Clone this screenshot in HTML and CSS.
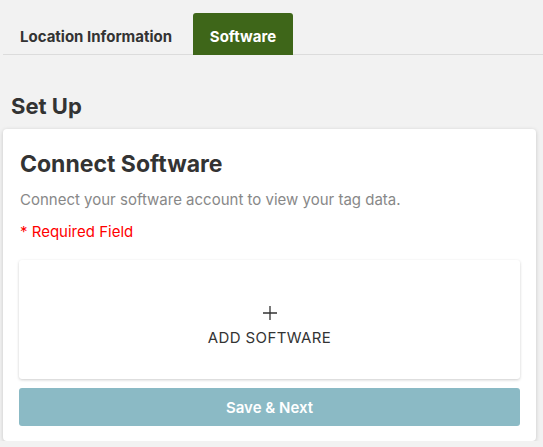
FILE: index.html
```html
<!DOCTYPE html>
<html>
<head>
<meta charset="utf-8">
<link rel="stylesheet" href="styles.css">
</head>
<body>
<nav class="tabs">
  <div class="tab">Location Information</div>
  <div class="tab tab-active">Software</div>
</nav>
<h2 class="section-title">Set Up</h2>
<section class="card">
  <h1 class="card-title">Connect Software</h1>
  <p class="card-desc">Connect your software account to view your tag data.</p>
  <p class="required">* Required Field</p>
  <div class="add-box">
    <svg class="plus" width="16" height="16" viewBox="0 0 16 16"><path d="M8 1v14M1 8h14" stroke="#333" stroke-width="1.3" fill="none"/></svg>
    <div class="add-label">ADD SOFTWARE</div>
  </div>
  <button class="save-btn">Save &amp; Next</button>
</section>
</body>
</html>
```
FILE: styles.css
```css
* { box-sizing: border-box; }
body {
  margin: 0;
  background: #f2f2f2;
  font-family: Inter, "Noto Sans", sans-serif;
  color: #333;
}
.tabs {
  display: flex;
  margin-left: 3px;
  padding-top: 13px;
  border-bottom: 1px solid #dcdcdc;
}
.tab {
  height: 42px;
  margin-bottom: -1px;
  padding-top: 4px;
  display: flex;
  align-items: center;
  font-weight: 700;
  font-size: 15px;
  color: #333;
}
.tab:first-child { width: 190px; padding-left: 17px; }
.tab-active {
  width: 100px;
  justify-content: center;
  background: #3e6619;
  color: #fff;
  border-radius: 3px 3px 0 0;
}
.section-title {
  margin: 0;
  padding: 38px 0 0 11px;
  font-size: 22px;
  line-height: 26px;
  font-weight: 700;
  color: #333;
}
.card {
  margin: 10px 0 0 3px;
  width: 533px;
  background: #fff;
  border-radius: 4px;
  box-shadow: 0 1px 4px rgba(0,0,0,0.18);
  padding: 20px 16px 15px 16px;
}
.card-title {
  margin: 0;
  font-size: 23px;
  line-height: 30px;
  font-weight: 700;
  color: #333;
  padding-left: 1px;
}
.card-desc {
  margin: 11px 0 0 1px;
  font-size: 15px;
  line-height: 20px;
  color: #888;
}
.required {
  margin: 12px 0 0 1px;
  font-size: 15px;
  line-height: 20px;
  color: #ff0000;
}
.add-box {
  margin-top: 18px;
  height: 119px;
  padding-top: 12px;
  background: #fff;
  border-radius: 3px;
  box-shadow: 0 1px 3px rgba(0,0,0,0.2);
  display: flex;
  flex-direction: column;
  align-items: center;
  justify-content: center;
  gap: 8px;
}
.plus { display: block; }
.add-label {
  font-size: 15px;
  letter-spacing: 0.4px;
  line-height: 18px;
  color: #333;
}
.save-btn {
  display: block;
  width: 100%;
  margin-top: 9px;
  height: 38px;
  border: 0;
  border-radius: 3px;
  background: #8bbac5;
  color: #fff;
  font-family: inherit;
  font-weight: 600;
  font-size: 15px;
}
```
